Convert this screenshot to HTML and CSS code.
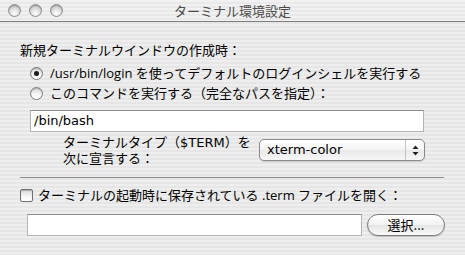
FILE: index.html
```html
<!DOCTYPE html>
<html lang="ja">
<head>
<meta charset="utf-8">
<title>ターミナル環境設定</title>
<link rel="stylesheet" href="styles.css">
</head>
<body>
<div class="window">
  <div class="titlebar">
    <div class="lights">
      <span class="light"></span><span class="light"></span><span class="light"></span>
    </div>
    <div class="title">ターミナル環境設定</div>
  </div>
  <div class="content">
    <div class="heading">新規ターミナルウインドウの作成時：</div>
    <div class="radios">
      <label class="radio-row"><span class="radio checked"></span><span>/usr/bin/login を使ってデフォルトのログインシェルを実行する</span></label>
      <label class="radio-row"><span class="radio"></span><span>このコマンドを実行する（完全なパスを指定）：</span></label>
    </div>
    <div class="field cmd">/bin/bash</div>
    <div class="term-row">
      <div class="term-label"><div>ターミナルタイプ（$TERM）を</div><div>次に宣言する：</div></div>
      <div class="popup">
        <span class="popup-text">xterm-color</span>
        <span class="popup-arrows">
          <svg width="7" height="11" viewBox="0 0 7 11"><path d="M3.5 0.5 L6.5 4 L0.5 4 Z M0.5 7 L6.5 7 L3.5 10.5 Z" fill="#222"/></svg>
        </span>
      </div>
    </div>
    <div class="separator"></div>
    <label class="check-row"><span class="checkbox"></span><span>ターミナルの起動時に保存されている .term ファイルを開く：</span></label>
    <div class="file-row">
      <div class="field file"></div>
      <div class="button">選択...</div>
    </div>
  </div>
</div>
</body>
</html>
```

FILE: styles.css
```css
* { box-sizing: border-box; }
html, body { margin: 0; padding: 0; }
body {
  width: 465px;
  height: 255px;
  overflow: hidden;
  font-family: "Open Sans", "Noto Sans CJK JP", sans-serif;
  font-size: 13px;
  color: #000;
}
.window {
  width: 465px;
  height: 255px;
  background: repeating-linear-gradient(to bottom, #eeeeee 0, #eeeeee 2px, #e6e6e6 2px, #e6e6e6 4px);
  display: flex;
  flex-direction: column;
}
.titlebar {
  height: 22px;
  border-bottom: 1px solid #7e7e7e;
  background: repeating-linear-gradient(to bottom, #f1f1f1 0, #f1f1f1 2px, #e9e9e9 2px, #e9e9e9 4px);
  display: flex;
  align-items: center;
  position: relative;
}
.lights {
  display: flex;
  gap: 8px;
  padding-left: 8px;
  margin-top: -1px;
}
.light {
  width: 13px;
  height: 13px;
  border-radius: 50%;
  border: 1px solid #8d8d8d;
  background: radial-gradient(circle at 50% 75%, #ffffff 0, #e6e6e6 35%, #b9b9b9 100%);
  box-shadow: inset 0 1px 1px rgba(0,0,0,0.25);
}
.title {
  position: absolute;
  left: 0;
  right: 0;
  top: 2px;
  text-align: center;
  font-family: "Noto Sans CJK JP", sans-serif;
  font-size: 13px;
  line-height: 18px;
  color: #4a4a4a;
}
.content {
  display: flex;
  flex-direction: column;
  padding: 0 20px 0 20px;
}
.heading {
  line-height: 18px;
  margin-top: 19px;
}
.radios {
  display: flex;
  flex-direction: column;
  gap: 2px;
  margin-top: 5px;
  padding-left: 10px;
}
.radio-row, .check-row {
  display: flex;
  align-items: center;
  line-height: 18px;
  gap: 7px;
}
.radio {
  width: 13px;
  height: 13px;
  border-radius: 50%;
  border: 1px solid #7a7a7a;
  background: linear-gradient(to bottom, #d6d6d6 0, #f4f4f4 55%, #ffffff 100%);
  box-shadow: inset 0 1px 1px rgba(0,0,0,0.2);
  display: flex;
  align-items: center;
  justify-content: center;
  flex: none;
}
.radio.checked::after {
  content: "";
  width: 5px;
  height: 5px;
  border-radius: 50%;
  background: #1a1a1a;
}
.field {
  background: #fff;
  border: 1px solid #b4b4b4;
  border-top-color: #8c8c8c;
  height: 22px;
  line-height: 20px;
  padding-left: 3px;
}
.field.cmd {
  margin-top: 8px;
  margin-left: 10px;
  margin-right: 21px;
  font-family: "DejaVu Sans", sans-serif;
}
.term-row {
  display: flex;
  align-items: flex-start;
  margin-top: 1px;
  padding-left: 43px;
}
.term-label {
  display: flex;
  flex-direction: column;
  font-family: "DejaVu Sans", "Noto Sans CJK JP", sans-serif;
  line-height: 16px;
  padding-top: 2px;
  width: 196px;
  white-space: nowrap;
}
.popup {
  margin-top: 6px;
  width: 166px;
  height: 22px;
  border: 1px solid #8a8a8a;
  border-radius: 5px;
  background: linear-gradient(to bottom, #ffffff 0, #f4f4f4 50%, #e9e9e9 51%, #f7f7f7 100%);
  box-shadow: 0 1px 1px rgba(0,0,0,0.15);
  display: flex;
  align-items: center;
}
.popup-text {
  flex: 1;
  padding-left: 7px;
  font-family: "DejaVu Sans", sans-serif;
  line-height: 18px;
}
.popup-arrows {
  width: 19px;
  align-self: stretch;
  border-left: 1px solid #c4c4c4;
  display: flex;
  align-items: center;
  justify-content: center;
}
.separator {
  margin-top: 10px;
  height: 1px;
  background: #8e8e8e;
  margin-right: 1px;
}
.check-row {
  margin-top: 8px;
  gap: 5px;
}
.checkbox {
  width: 13px;
  height: 13px;
  border: 1px solid #6f6f6f;
  border-radius: 2px;
  background: linear-gradient(to bottom, #d9d9d9 0, #f7f7f7 60%, #ffffff 100%);
  box-shadow: inset 0 1px 1px rgba(0,0,0,0.2);
  flex: none;
}
.file-row {
  display: flex;
  align-items: center;
  gap: 5px;
  margin-top: 10px;
  padding-left: 7px;
}
.field.file {
  width: 335px;
}
.button {
  width: 78px;
  height: 22px;
  border: 1px solid #7c7c7c;
  border-radius: 11px;
  background: linear-gradient(to bottom, #ffffff 0, #f2f2f2 50%, #e4e4e4 51%, #fafafa 100%);
  box-shadow: 0 1px 1px rgba(0,0,0,0.2);
  text-align: center;
  line-height: 20px;
  font-family: "Noto Sans CJK JP", sans-serif;
}
```
